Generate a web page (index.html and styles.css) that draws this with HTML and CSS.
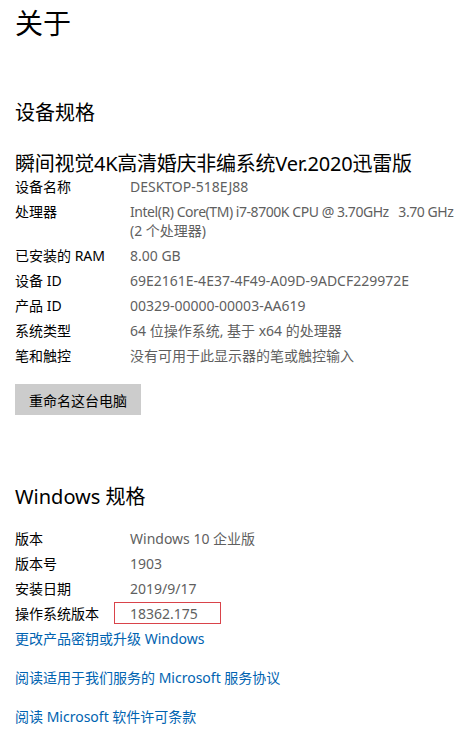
FILE: index.html
```html
<!DOCTYPE html>
<html lang="zh-CN">
	<head>
		<meta charset="UTF-8" />
		<meta name="viewport" content="width=device-width, initial-scale=1.0" />
		<title>关于</title>
		<link rel="stylesheet" href="styles.css">
	</head>
	<body>
		<main class="about">
			<h1 class="page-title">关于</h1>

			<h2 class="section-title">设备规格</h2>
			<div class="device-name">瞬间视觉4K高清婚庆非编系统Ver.2020迅雷版</div>

			<dl class="specs">
				<dt>设备名称</dt>
				<dd>DESKTOP-518EJ88</dd>
				<dt>处理器</dt>
				<dd><span class="cpu">Intel(R) Core(TM) i7-8700K CPU @ 3.70GHz &nbsp; 3.70 GHz</span><br>(2 个处理器)</dd>
				<dt>已安装的 RAM</dt>
				<dd>8.00 GB</dd>
				<dt>设备 ID</dt>
				<dd>69E2161E-4E37-4F49-A09D-9ADCF229972E</dd>
				<dt>产品 ID</dt>
				<dd>00329-00000-00003-AA619</dd>
				<dt>系统类型</dt>
				<dd>64 位操作系统, 基于 x64 的处理器</dd>
				<dt>笔和触控</dt>
				<dd>没有可用于此显示器的笔或触控输入</dd>
			</dl>

			<button class="rename-btn">重命名这台电脑</button>

			<h2 class="section-title windows-title">Windows 规格</h2>

			<dl class="specs">
				<dt>版本</dt>
				<dd>Windows 10 企业版</dd>
				<dt>版本号</dt>
				<dd>1903</dd>
				<dt>安装日期</dt>
				<dd>2019/9/17</dd>
				<dt>操作系统版本</dt>
				<dd><span class="marked">18362.175</span></dd>
			</dl>

			<div class="links">
				<a href="#">更改产品密钥或升级 Windows</a>
				<a href="#">阅读适用于我们服务的 Microsoft 服务协议</a>
				<a href="#">阅读 Microsoft 软件许可条款</a>
			</div>
		</main>
	</body>
</html>
```

FILE: styles.css
```css
body {
	margin: 0;
	background: #fff;
	color: #000;
	font-family: "Noto Sans", "Noto Sans CJK SC", sans-serif;
}

.about {
	padding: 3px 0 0 15px;
}

.page-title {
	margin: 0;
	font-size: 28px;
	font-weight: normal;
	line-height: 40px;
}

.section-title {
	margin: 57px 0 0;
	font-size: 20px;
	font-weight: normal;
	line-height: 26px;
}

.device-name {
	margin-top: 25px;
	font-size: 20px;
	line-height: 26px;
	letter-spacing: -0.25px;
	white-space: nowrap;
}

.specs {
	display: grid;
	grid-template-columns: 115px 1fr;
	row-gap: 6px;
	margin: 0;
	font-size: 14px;
	line-height: 19px;
}

.specs dt {
	color: #000;
}

.specs dd {
	margin: 0;
	color: #5f5f5f;
}

.cpu {
	white-space: nowrap;
	letter-spacing: -0.45px;
}

.marked {
	position: relative;
}

.marked::after {
	content: '';
	position: absolute;
	left: -16px;
	top: -2px;
	width: 107px;
	height: 22px;
	border: 1px solid #d9434a;
	box-sizing: border-box;
}

.rename-btn {
	display: block;
	margin-top: 19px;
	width: 126px;
	height: 31px;
	padding: 0;
	border: none;
	background: #cccccc;
	color: #000;
	font-family: inherit;
	font-size: 14px;
}

.windows-title {
	margin-top: 69px;
	margin-bottom: 19px;
}

.links {
	display: flex;
	flex-direction: column;
	align-items: flex-start;
	gap: 20px;
	margin-top: 6px;
	font-size: 14px;
	line-height: 19px;
}

.links a {
	color: #0063b1;
	text-decoration: none;
}
```
